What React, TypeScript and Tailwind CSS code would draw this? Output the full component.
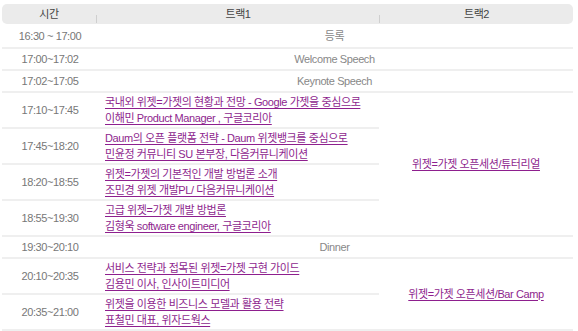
import React from "react";

const F = { fontFamily: '"Liberation Sans", "Noto Sans CJK KR", sans-serif' };

const cellB = "border-b-2 border-[#efefef] flex items-center";

function Time({ t, extra = "" }: { t: string; extra?: string }) {
  return <div className={`${cellB} ${extra} justify-center text-[#777] pl-[2px]`}>{t}</div>;
}

function Span2({ t, extra = "" }: { t: string; extra?: string }) {
  return <div className={`${cellB} ${extra} col-span-2 justify-center text-[#888]`}>{t}</div>;
}

function Talk({ a, b }: { a: string; b: string }) {
  return (
    <div className={`${cellB} pl-[9px]`}>
      <div className="flex flex-col items-start leading-[16px]">
        <a href="#" className="text-[#8e1f8e] underline underline-offset-[2px] whitespace-nowrap">{a}</a>
        <a href="#" className="text-[#8e1f8e] underline underline-offset-[2px] whitespace-nowrap">{b}</a>
      </div>
    </div>
  );
}

function Track2({ t, span }: { t: string; span: string }) {
  return (
    <div className={`${cellB} ${span} justify-center`}>
      <a href="#" className="text-[#8e1f8e] underline underline-offset-[2px] whitespace-nowrap">{t}</a>
    </div>
  );
}

export default function App() {
  return (
    <div className="w-[578px] h-[331px] bg-white text-[11px] tracking-[-0.4px] overflow-hidden" style={F}>
      <div className="pt-[4px] pl-[2px] w-[573px]">
        <div className="h-[20px] bg-[#ebebeb] rounded-[5px] flex text-[#444] pt-[1px]">
          <div className="w-[94px] flex items-center justify-center">시간</div>
          <div className="w-px h-[8px] self-end mb-[1px] bg-[#cfcfcf]" />
          <div className="w-[282px] flex items-center justify-center">트랙1</div>
          <div className="w-px h-[8px] self-end mb-[1px] bg-[#cfcfcf]" />
          <div className="flex-1 flex items-center justify-center">트랙2</div>
        </div>
        <div className="grid grid-cols-[94px_283px_194px] grid-rows-[25px_22px_22px_36px_36px_36px_36px_22px_36px_36px]">
          <Time t="16:30 ~ 17:00" extra="pt-[2px]" />
          <Span2 t="등록" extra="pt-[2px]" />
          <Time t="17:00~17:02" />
          <Span2 t="Welcome Speech" />
          <Time t="17:02~17:05" />
          <Span2 t="Keynote Speech" />
          <Time t="17:10~17:45" />
          <Talk a="국내외 위젯=가젯의 현황과 전망 - Google 가젯을 중심으로" b="이해민 Product Manager , 구글코리아" />
          <Track2 t="위젯=가젯 오픈세션/튜터리얼" span="row-span-4" />
          <Time t="17:45~18:20" />
          <Talk a="Daum의 오픈 플랫폼 전략 - Daum 위젯뱅크를 중심으로" b="민윤정 커뮤니티 SU 본부장, 다음커뮤니케이션" />
          <Time t="18:20~18:55" />
          <Talk a="위젯=가젯의 기본적인 개발 방법론 소개" b="조민경 위젯 개발PL/ 다음커뮤니케이션" />
          <Time t="18:55~19:30" />
          <Talk a="고급 위젯=가젯 개발 방법론" b="김형욱 software engineer, 구글코리아" />
          <Time t="19:30~20:10" />
          <Span2 t="Dinner" />
          <Time t="20:10~20:35" />
          <Talk a="서비스 전략과 접목된 위젯=가젯 구현 가이드" b="김용민 이사, 인사이트미디어" />
          <Track2 t="위젯=가젯 오픈세션/Bar Camp" span="row-span-2" />
          <Time t="20:35~21:00" />
          <Talk a="위젯을 이용한 비즈니스 모델과 활용 전략" b="표철민 대표, 위자드웍스" />
        </div>
      </div>
    </div>
  );
}
